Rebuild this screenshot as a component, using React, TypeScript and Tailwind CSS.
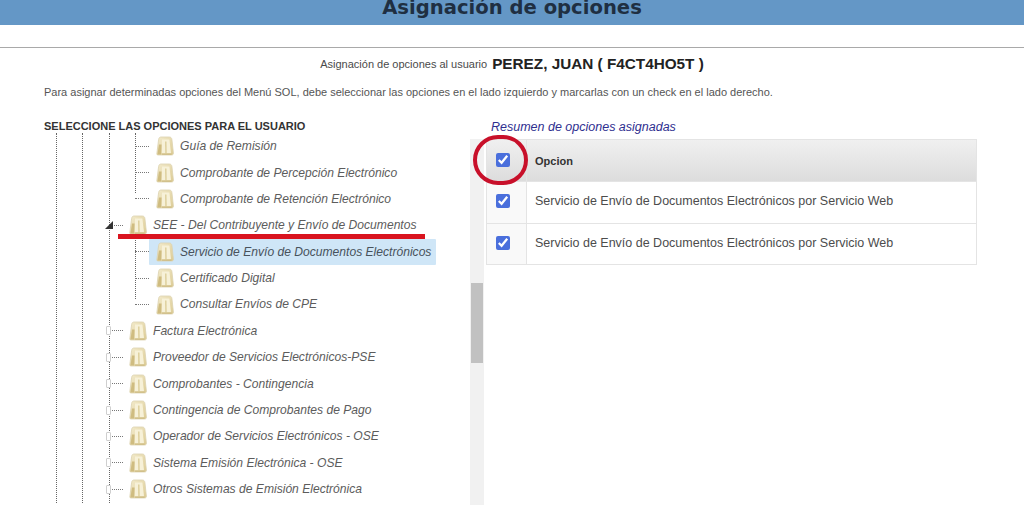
import React from "react";

const sans = { fontFamily: '"Liberation Sans", Arial, sans-serif' };

const FolderIcon = () => (
  <svg width="18" height="20" viewBox="0 0 18 20" className="shrink-0">
    <defs>
      <linearGradient id="fold" x1="0" y1="0" x2="1" y2="1">
        <stop offset="0" stopColor="#f3ebcc" />
        <stop offset="1" stopColor="#dccb94" />
      </linearGradient>
    </defs>
    <path d="M.8 18 2.6 3.5C2.8 2 3.6 1 5 1h8.2c1.6 0 2.5.9 2.7 2.4L17.4 17c.1 1.2-.5 2-1.7 2H2c-.8 0-1.2-.4-1.2-1Z" fill="url(#fold)" stroke="#dcd2ae" strokeWidth="0.8" />
    <path d="M6 3.5h7.4l1.6 13.8H5.4Z" fill="#f7f1d8" />
    <path d="M9.8 5.5 10 17.3" stroke="#d8c88f" strokeWidth="1.2" />
    <path d="M1.4 18.4 3 8.5h2.6l-.3 9.9Z" fill="#cfbc80" />
    <path d="M6 17.6h9.6v1H6Z" fill="#c9b67c" />
  </svg>
);

type RowProps = {
  label: string;
  level: 2 | 3;
  selected?: boolean;
  state?: "open" | "closed";
};

const TreeRow = ({ label, level, selected, state }: RowProps) => (
  <div className={`relative flex h-[26.4px] items-center ${level === 3 ? "pl-[135px]" : "pl-[109px]"}`}>
    {state === "closed" && (
      <span className="absolute left-[106px] h-[9px] w-[5px] rounded-[1px] border border-[#cfcfcf] bg-white" />
    )}
    {state === "open" && (
      <span className="absolute left-[105px] h-0 w-0 border-b-[8px] border-l-[8px] border-b-[#333] border-l-transparent" />
    )}
    <span className="w-[14px] border-t border-dotted border-[#777]" />
    {selected ? (
      <div className="flex h-[26px] items-center rounded-[1px] bg-[#cfe6f7] pl-[7px] pr-[5px]">
        <FolderIcon />
        <span className="ml-[6px] whitespace-nowrap text-[12.1px] italic text-[#48525c]">{label}</span>
      </div>
    ) : (
      <div className={`flex items-center ${level === 3 ? "pl-[7px]" : "pl-[6px]"}`}>
        <FolderIcon />
        <span className="ml-[6px] whitespace-nowrap text-[12.1px] italic text-[#5c5c5c]">{label}</span>
      </div>
    )}
  </div>
);

const rows: RowProps[] = [
  { label: "Guía de Remisión", level: 3 },
  { label: "Comprobante de Percepción Electrónico", level: 3 },
  { label: "Comprobante de Retención Electrónico", level: 3 },
  { label: "SEE - Del Contribuyente y Envío de Documentos", level: 2, state: "open" },
  { label: "Servicio de Envío de Documentos Electrónicos", level: 3, selected: true },
  { label: "Certificado Digital", level: 3 },
  { label: "Consultar Envíos de CPE", level: 3 },
  { label: "Factura Electrónica", level: 2, state: "closed" },
  { label: "Proveedor de Servicios Electrónicos-PSE", level: 2, state: "closed" },
  { label: "Comprobantes - Contingencia", level: 2, state: "closed" },
  { label: "Contingencia de Comprobantes de Pago", level: 2, state: "closed" },
  { label: "Operador de Servicios Electrónicos - OSE", level: 2, state: "closed" },
  { label: "Sistema Emisión Electrónica - OSE", level: 2, state: "closed" },
  { label: "Otros Sistemas de Emisión Electrónica", level: 2, state: "closed" },
];

const Check = () => (
  <input type="checkbox" defaultChecked readOnly className="block h-[14px] w-[14px] accent-[#4a6fdc]" />
);

const optionText = "Servicio de Envío de Documentos Electrónicos por Servicio Web";

export default function App() {
  return (
    <div className="relative h-[505px] w-[1024px] overflow-hidden bg-white" style={sans}>
      {/* Header */}
      <div className="flex h-[25px] items-end justify-center overflow-hidden bg-[#6497c6]">
        <h1 className="mb-[5px] whitespace-nowrap text-[19.6px] font-bold leading-[24px] text-[#1f2f42]" style={{ fontFamily: '"DejaVu Sans", sans-serif' }}>
          Asignación de opciones
        </h1>
      </div>
      <div className="mt-[22px] border-t border-[#a9a9a9]" />

      <div className="mt-[6px] flex h-[20px] items-center justify-center text-[#4a4a4a]">
        <span className="text-[11px]">Asignación de opciones al usuario</span>
        <span className="ml-[5px] text-[15.3px] font-bold text-[#222]">PEREZ, JUAN ( F4CT4HO5T )</span>
      </div>

      <p className="mt-[8px] pl-[44px] text-[11px] leading-[20px] text-[#555]">
        Para asignar determinadas opciones del Menú SOL, debe seleccionar las opciones en el lado izquierdo y marcarlas con un check en el lado derecho.
      </p>

      <div className="mt-[16px] flex">
        {/* Tree */}
        <div className="w-[470px]">
          <h2 className="h-[15px] pl-[44px] text-[11px] font-bold leading-[16px] text-[#333]">
            SELECCIONE LAS OPCIONES PARA EL USUARIO
          </h2>
          <div className="relative h-[370px] overflow-hidden">
            <span className="absolute bottom-0 left-[56px] top-0 border-l border-dotted border-[#666]" />
            <span className="absolute bottom-0 left-[82px] top-0 border-l border-dotted border-[#666]" />
            <span className="absolute bottom-0 left-[109px] top-0 border-l border-dotted border-[#666]" />
            <span className="absolute left-[135px] top-0 h-[60px] border-l border-dotted border-[#666]" />
            <span className="absolute left-[135px] top-[100px] h-[66px] border-l border-dotted border-[#666]" />
            {rows.map((row) => (
              <TreeRow key={row.label} {...row} />
            ))}
          </div>
        </div>

        {/* Scrollbar */}
        <div className="mt-[21px] flex h-[367px] w-[14px] flex-col bg-[#f1f1f1] px-px pt-[144px]">
          <div className="h-[80px] bg-[#c1c1c1]" />
        </div>

        {/* Resumen */}
        <div className="ml-[2px] w-[491px]">
          <div className="-mt-[1px] h-[22px] pl-[5px] text-[12.5px] italic leading-[20px] text-[#2f2f8f]">
            Resumen de opciones asignadas
          </div>
          <table className="w-full border-collapse border border-[#e4e4e4] text-[12.5px] text-[#4c4c4c]">
            <tbody>
              <tr className="h-[42px] bg-gradient-to-b from-[#f0f0f0] to-[#dcdcdc]">
                <td className="w-[40px] border border-[#e4e4e4] pb-[2px] pl-[9px] align-middle"><Check /></td>
                <td className="pl-[8px] pt-[1px] text-[11px] font-bold text-[#333]">Opcion</td>
              </tr>
              <tr className="h-[42px]">
                <td className="border border-[#e4e4e4] bg-[#f9f9f9] pb-[3px] pl-[9px] align-middle"><Check /></td>
                <td className="border border-[#e4e4e4] pb-[2px] pl-[8px]">{optionText}</td>
              </tr>
              <tr className="h-[41px]">
                <td className="border border-[#e4e4e4] bg-[#f9f9f9] pb-[3px] pl-[9px] align-middle"><Check /></td>
                <td className="border border-[#e4e4e4] pb-[1px] pl-[8px]">{optionText}</td>
              </tr>
            </tbody>
          </table>
        </div>
      </div>

      {/* Annotations drawn on top of the screenshot */}
      <div className="absolute left-[118px] top-[234px] h-[5px] w-[307px] bg-[#d9141f]" />
      <div className="absolute left-[473px] top-[135px] h-[50px] w-[55px] rounded-full border-[4px] border-[#c8102a]" />
    </div>
  );
}
